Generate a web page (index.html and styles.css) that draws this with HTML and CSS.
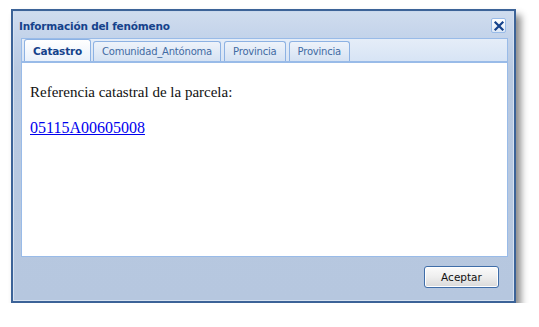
FILE: index.html
```html
<!DOCTYPE html>
<html lang="es">
<head>
<meta charset="utf-8">
<title>Información del fenómeno</title>
<link rel="stylesheet" href="styles.css">
</head>
<body>
<div class="window">
  <div class="win-inner">
    <div class="titlebar">
      <span class="title">Información del fenómeno</span>
      <span class="close" aria-label="Cerrar">
        <svg width="12" height="12" viewBox="0 0 12 12"><path d="M2.5 2.5 L9.5 9.5 M9.5 2.5 L2.5 9.5" stroke="#15428b" stroke-width="2.2" stroke-linecap="square"/></svg>
      </span>
    </div>
    <div class="tabpanel">
      <div class="tabstrip">
        <div class="tab active">Catastro</div>
        <div class="tab">Comunidad_Antónoma</div>
        <div class="tab">Provincia</div>
        <div class="tab">Provincia</div>
      </div>
      <div class="body">
        <p class="label">Referencia catastral de la parcela:</p>
        <p class="ref"><a href="#">05115A00605008</a></p>
      </div>
    </div>
    <div class="footer">
      <button class="btn" type="button">Aceptar</button>
    </div>
  </div>
</div>
</body>
</html>
```

FILE: styles.css
```css
html, body {
  margin: 0;
  padding: 0;
  background: #ffffff;
}

body {
  padding: 9px 0 0 11px;
}

.window {
  width: 505px;
  height: 294px;
  box-sizing: border-box;
  border: 2px solid #3c6398;
  background: #b8c9e1;
  box-shadow: 5px 6px 7px rgba(0, 0, 0, 0.45);
}

.win-inner {
  height: 100%;
  box-sizing: border-box;
  border: 1px solid #d6e2f1;
  border-top-color: #c9d8ec;
  display: flex;
  flex-direction: column;
  padding: 0 5px 0 7px;
  background: linear-gradient(#cfdcee 0px, #c3d3ea 26px, #b8c9e1 60px, #b6c7df 100%);
}

.titlebar {
  height: 25px;
  display: flex;
  align-items: center;
  justify-content: space-between;
  padding-top: 1px;
}

.title {
  font-family: "DejaVu Sans", Verdana, sans-serif;
  font-weight: bold;
  font-size: 10.5px;
  color: #15428b;
  letter-spacing: -0.2px;
  margin-left: -2px;
}

.close {
  width: 15px;
  height: 15px;
  box-sizing: border-box;
  border: 1px solid #99bbe8;
  border-radius: 2px;
  background: linear-gradient(#ffffff, #dde8f6);
  display: flex;
  align-items: center;
  justify-content: center;
  margin-right: 2px;
}

.tabpanel {
  display: flex;
  flex-direction: column;
  height: 219px;
}

.tabstrip {
  height: 25px;
  box-sizing: border-box;
  border: 1px solid #99bbe8;
  border-bottom: 2px solid #99bbe8;
  background: linear-gradient(#e5edf8, #d7e4f5);
  display: flex;
  align-items: flex-end;
  gap: 3px;
  padding-left: 2px;
}

.tab {
  height: 20px;
  box-sizing: border-box;
  border: 1px solid #8db2e3;
  border-bottom: none;
  border-radius: 3px 3px 0 0;
  background: linear-gradient(#eef3fa, #d5e2f3);
  font-family: "DejaVu Sans", Verdana, sans-serif;
  font-size: 10px;
  color: #416aa3;
  display: flex;
  align-items: center;
  padding: 0 8px;
  letter-spacing: -0.2px;
}

.tab.active {
  height: 22px;
  background: linear-gradient(#ffffff, #eaf1fb);
  color: #15428b;
  font-weight: bold;
  font-size: 10.5px;
  padding: 0 8px 0 8px;
  margin-right: -1px;
}

.body {
  flex: 1;
  background: #ffffff;
  border: 1px solid #99bbe8;
  border-top: none;
  padding: 0 8px;
}

.label {
  font-family: "Liberation Serif", "Times New Roman", serif;
  font-size: 15px;
  color: #111111;
  margin: 21px 0 0 0;
}

.ref {
  font-family: "Liberation Serif", "Times New Roman", serif;
  font-size: 16px;
  margin: 18px 0 0 0;
}

.ref a {
  color: #0000ee;
  text-decoration: underline;
}

.footer {
  flex: 1;
  display: flex;
  justify-content: flex-end;
  align-items: flex-start;
  padding: 9px 9px 0 0;
}

.btn {
  width: 75px;
  height: 22px;
  border: 1px solid #3f6da8;
  border-radius: 3px;
  background: linear-gradient(#fbfbfb 0%, #eeeeee 50%, #d9d9d9 100%);
  font-family: "DejaVu Sans", Verdana, sans-serif;
  font-size: 10.5px;
  color: #111111;
  padding: 0;
  box-shadow: inset 0 0 0 1px #ffffff;
}
```
